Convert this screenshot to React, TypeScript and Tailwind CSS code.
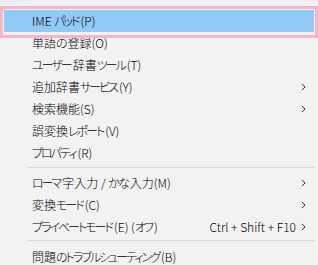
import React from "react";

const Chevron = () => (
  <svg width="5" height="8" viewBox="0 0 5 8" className="shrink-0">
    <path d="M1 0.8 L4 4 L1 7.2" fill="none" stroke="#333" strokeWidth="1" />
  </svg>
);

type Item = { label: string; sub?: boolean; shortcut?: string; hl?: boolean };

const Label = ({ text }: { text: string }) => {
  const parts = text.split(/([\u3041-\u30ff]+)/).filter((p) => p.length > 0);
  return (
    <>
      {parts.map((p, i) =>
        /[\u3041-\u30ff]/.test(p) ? (
          <span key={i} className="tracking-[-2px] pr-[2px]">
            {p}
          </span>
        ) : (
          <span key={i}>{p}</span>
        )
      )}
    </>
  );
};

const Row = ({ item }: { item: Item }) => (
  <div
    className={`h-[22px] flex items-center pl-[28px] pr-[8px] ${item.hl ? "bg-[#91c9f7]" : ""}`}
  >
    <span className="flex-1 whitespace-nowrap">
      <Label text={item.label} />
    </span>
    {item.shortcut && <span className="mr-[5px] whitespace-nowrap">{item.shortcut}</span>}
    {item.sub && <Chevron />}
  </div>
);

const Sep = ({ top }: { top: string }) => (
  <div className={`h-[8px] pl-[23px] ${top}`}>
    <div className="h-px bg-[#d7d7d7]" />
  </div>
);

export default function App() {
  const g1: Item[] = [
    { label: "IME パッド(P)", hl: true },
    { label: "単語の登録(O)" },
    { label: "ユーザー辞書ツール(T)" },
    { label: "追加辞書サービス(Y)", sub: true },
    { label: "検索機能(S)", sub: true },
    { label: "誤変換レポート(V)" },
    { label: "プロパティ(R)" },
  ];
  const g2: Item[] = [
    { label: "ローマ字入力 / かな入力(M)", sub: true },
    { label: "変換モード(C)", sub: true },
    { label: "プライベートモード(E) (オフ)", sub: true, shortcut: "Ctrl + Shift + F10" },
  ];
  const g3: Item[] = [{ label: "問題のトラブルシューティング(B)" }];
  return (
    <div
      className="relative w-[318px] h-[265px] overflow-hidden bg-[#f2f2f2] text-[12px] font-light text-[#000] [font-feature-settings:'palt']"
      style={{ fontFamily: '"Noto Sans CJK JP", "Noto Sans", sans-serif' }}
    >
      <div className="h-[10px]">
        <div className="w-[22px] h-[3px] bg-[#e6eef6]" />
      </div>
      <div className="pl-[4px] pr-[4px]">
        {g1.map((it) => (
          <Row key={it.label} item={it} />
        ))}
        <Sep top="pt-[3px]" />
        {g2.map((it) => (
          <Row key={it.label} item={it} />
        ))}
        <Sep top="pt-[2px]" />
        {g3.map((it) => (
          <Row key={it.label} item={it} />
        ))}
      </div>
      <div className="absolute left-0 top-[6px] w-[318px] h-[32px] border-[3px] border-[#f6b4c9] pointer-events-none" />
    </div>
  );
}
